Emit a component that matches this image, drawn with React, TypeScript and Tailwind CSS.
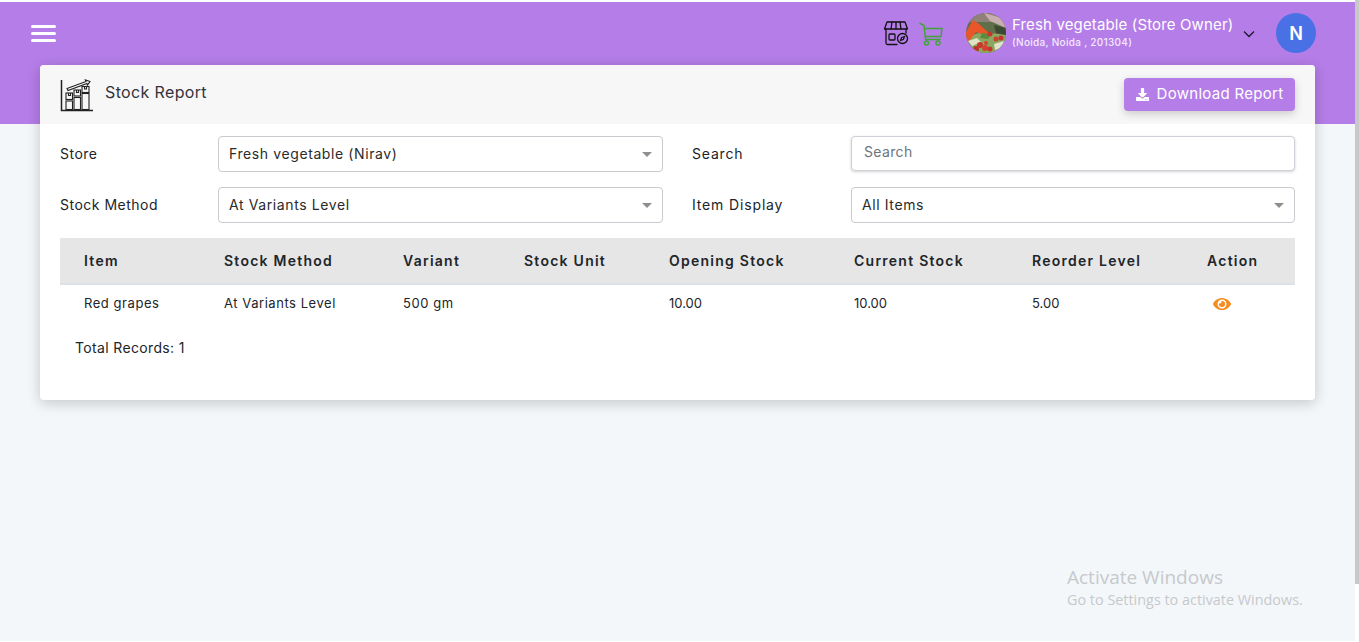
import React from "react";
import { FaDownload, FaEye } from "react-icons/fa";

const font = "font-['Inter','Noto_Sans',sans-serif]";

function StoreIcon() {
  return (
    <svg width="26" height="26" viewBox="0 0 26 26" fill="none" stroke="#111" strokeWidth="1.3" strokeLinejoin="round" strokeLinecap="round">
      <path d="M4 2h18l2.500 7H1.500z" />
      <path d="M9 2 8 9M13 2v7M17 2l1 7" />
      <path d="M3 9v14a1.500 1.500 0 0 0 1.500 1.500H14M23 9v4" />
      <rect x="6" y="14" width="6" height="6" rx="1" />
      <circle cx="19.500" cy="18.500" r="5" />
      <path d="M17.500 20.500l1.200-3 2.800-1-1.200 3z" />
    </svg>
  );
}

function CartIcon() {
  return (
    <svg width="24" height="24" viewBox="0 0 24 24" fill="none" stroke="#3fa535" strokeWidth="1.400" strokeLinejoin="round" strokeLinecap="round">
      <path d="M1 1.500 5 3.500l1.500 14H21" />
      <path d="M5.300 6.500H23l-1 8H6.300" />
      <circle cx="7.500" cy="21" r="2" />
      <circle cx="19" cy="21" r="2" />
    </svg>
  );
}

function StorePhoto() {
  return (
    <svg width="40" height="40" viewBox="0 0 40 40" className="shrink-0 rounded-full">
      <rect width="40" height="40" fill="#5f6f4a" />
      <rect width="40" height="9" fill="#8f8078" />
      <path d="M18 0l22 6v9L24 8z" fill="#c9aeb0" />
      <path d="M0 24l16-5 24 3v18H0z" fill="#8aa860" />
      <path d="M28 12l12 3v7l-10-2z" fill="#3d4a33" />
      <path d="M0 19 7 7l6 4 10 9-3 3-10-4-6 8-4 2z" fill="#e8562a" />
      <path d="M2 28l9-3 4 4-9 4zM28 31l10-3-2 7-7 2z" fill="#dfe3c8" />
      <path d="M16 20l9 1-3 5-8-1z" fill="#5e8a3c" />
      <circle cx="24" cy="21" r="2.500" fill="#c7352c" />
      <circle cx="30" cy="26" r="2.500" fill="#d0402f" />
      <circle cx="35" cy="25" r="2.500" fill="#c7352c" />
      <circle cx="14" cy="32" r="3" fill="#c9382d" />
      <circle cx="19" cy="35" r="3" fill="#d5422f" />
      <circle cx="10" cy="36" r="3" fill="#bf3229" />
      <circle cx="24" cy="36" r="2.500" fill="#c7352c" />
      <circle cx="20" cy="30" r="2" fill="#d5422f" />
    </svg>
  );
}

function ReportIcon() {
  return (
    <svg width="34" height="34" viewBox="0 0 34 34" fill="none" stroke="#222" strokeWidth="1.100">
      <path d="M1.500 2v30.500H33" strokeWidth="1.500" />
      <rect x="6" y="23" width="6.500" height="8.500" />
      <rect x="14" y="19.500" width="6.500" height="12" />
      <rect x="22" y="15.500" width="7" height="16" />
      <rect x="6" y="15" width="6.500" height="6.500" />
      <rect x="14" y="12" width="6.500" height="6" />
      <rect x="22" y="8.500" width="7" height="6" />
      <path d="M8.500 15v2.500h2V15M16.500 12v2.500h2V12M24.500 8.500V11h2V8.500" />
      <path d="M7 10.500 26 3.500l-.6-1.500L30 3.500l-2.500 3.500-.6-1.500L8 12.500z" />
    </svg>
  );
}

function Select({ value }: { value: string }) {
  return (
    <div className="flex h-9 items-center justify-between rounded border border-[#c9c9cf] bg-white pl-2.5 pr-[10px]">
      <span className="-mt-px text-[14px] tracking-[0.6px] text-[#2b2b2b]">{value}</span>
      <span className="h-0 w-0 border-x-[5px] border-t-[5px] border-x-transparent border-t-[#8f8f8f]" />
    </div>
  );
}

const columns = [
  "Item",
  "Stock Method",
  "Variant",
  "Stock Unit",
  "Opening Stock",
  "Current Stock",
  "Reorder Level",
  "Action",
];
const grid = "grid grid-cols-[164px_179px_121px_145px_185px_178px_175px_88px]";

export default function App() {
  return (
    <div className={`${font} relative flex h-[642px] w-full overflow-hidden bg-white text-[#212529]`}>
      <div className="flex min-w-0 flex-1 flex-col pt-0.5">
        <div className="min-h-0 flex-1 bg-[#f4f7fa]">
          <header className="flex h-[122px] items-start justify-between bg-[#b57de8] pl-[31px] pr-[39px] pt-[11px]">
            <button className="mt-3 flex w-[25px] flex-col gap-1" aria-label="Menu">
              <span className="h-[3px] rounded-sm bg-white" />
              <span className="h-[3px] rounded-sm bg-white" />
              <span className="h-[3px] rounded-sm bg-white" />
            </button>
            <div className="flex items-center">
              <StoreIcon />
              <span className="ml-2.5 mt-0.5"><CartIcon /></span>
              <span className="ml-[23px]"><StorePhoto /></span>
              <div className="-mt-0.5 ml-1.5 flex w-[228px] flex-col whitespace-nowrap text-white">
                <span className="text-[15px] leading-5 tracking-[0.14px]">Fresh vegetable (Store Owner)</span>
                <span className="text-[10px] font-medium leading-[14px] tracking-[0.3px] text-[#f3e9fc]">(Noida, Noida , 201304)</span>
              </div>
              <svg width="12" height="8" viewBox="0 0 12 8" fill="none" stroke="#1a1a2a" strokeWidth="1.300" className="ml-[3px] mt-0.5">
                <path d="M1 1.500 6 6.500l5-5" />
              </svg>
              <div className="ml-[21px] flex h-10 w-10 items-center justify-center rounded-full bg-[#4a70e6] text-[18px] font-semibold text-white">N</div>
            </div>
          </header>

          <main className="mx-10 -mt-[59px] h-[335px] rounded bg-white shadow-[0_3px_14px_rgba(0,0,0,0.2)]">
            <div className="flex h-[59px] items-center justify-between rounded-t bg-[#f7f7f7] pl-5 pr-5">
              <div className="flex items-center gap-[11px]">
                <ReportIcon />
                <h1 className="-mt-1.5 text-[16px] tracking-[0.36px] text-[#33333d]">Stock Report</h1>
              </div>
              <button className="flex h-[33px] w-[171px] items-center justify-center gap-2 rounded bg-[#b57de8] text-[15px] tracking-[0.3px] text-white shadow-[0_3px_8px_rgba(0,0,0,0.18)]">
                <FaDownload className="text-[13px]" />
                Download Report
              </button>
            </div>

            <div className="px-5 pt-3">
              <div className="grid grid-cols-[158px_445px_29px_159px_444px] items-center gap-y-[15px] text-[14px] tracking-[0.5px]">
                <label className="-mt-0.5">Store</label>
                <Select value="Fresh vegetable (Nirav)" />
                <span />
                <label className="-mt-0.5 tracking-[0.8px]">Search</label>
                <input
                  placeholder="Search"
                  readOnly
                  className="-mt-px h-[35px] rounded border border-[#cfcfd8] bg-white px-3 pb-1 text-[14px] tracking-[0.35px] shadow-[0_1px_3px_rgba(0,0,0,0.18)] outline-none placeholder:text-[#6c757d]"
                />
                <label className="-mt-0.5">Stock Method</label>
                <Select value="At Variants Level" />
                <span />
                <label className="-mt-0.5 tracking-[0.85px]">Item Display</label>
                <Select value="All Items" />
              </div>

              <div className={`${grid} mt-[15px] h-[47px] items-center border-b-2 border-[#dee2e6] bg-[#e6e6e6] text-[14px] font-semibold tracking-[1.25px] text-[#212529]`}>
                {columns.map((c, i) => (
                  <div key={c} className={i === 0 ? "pl-6" : ""}>{c}</div>
                ))}
              </div>
              <div className={`${grid} h-[38px] items-center text-[13px] tracking-[0.55px]`}>
                <div className="pl-6">Red grapes</div>
                <div>At Variants Level</div>
                <div>500 gm</div>
                <div />
                <div className="tracking-normal">10.00</div>
                <div className="tracking-normal">10.00</div>
                <div className="tracking-normal">5.00</div>
                <div className="pl-1.5"><FaEye className="text-[18px] text-[#f68c1f]" /></div>
              </div>
              <p className="mt-[15px] pl-[15px] text-[14px] leading-5 tracking-[0.35px]">Total Records: 1</p>
            </div>
          </main>
        </div>
        <div className="h-px shrink-0 bg-white" />
      </div>

      <div className="w-1 shrink-0 bg-white">
        <div className="h-[584px] bg-[#c8c8c8]" />
      </div>

      <div className="absolute left-[1067px] top-[564px] font-['Open_Sans',sans-serif] text-[#c6c9cc]">
        <div className="text-[19px] leading-[26px]">Activate Windows</div>
        <div className="text-[14.4px] leading-[20px]">Go to Settings to activate Windows.</div>
      </div>
    </div>
  );
}
